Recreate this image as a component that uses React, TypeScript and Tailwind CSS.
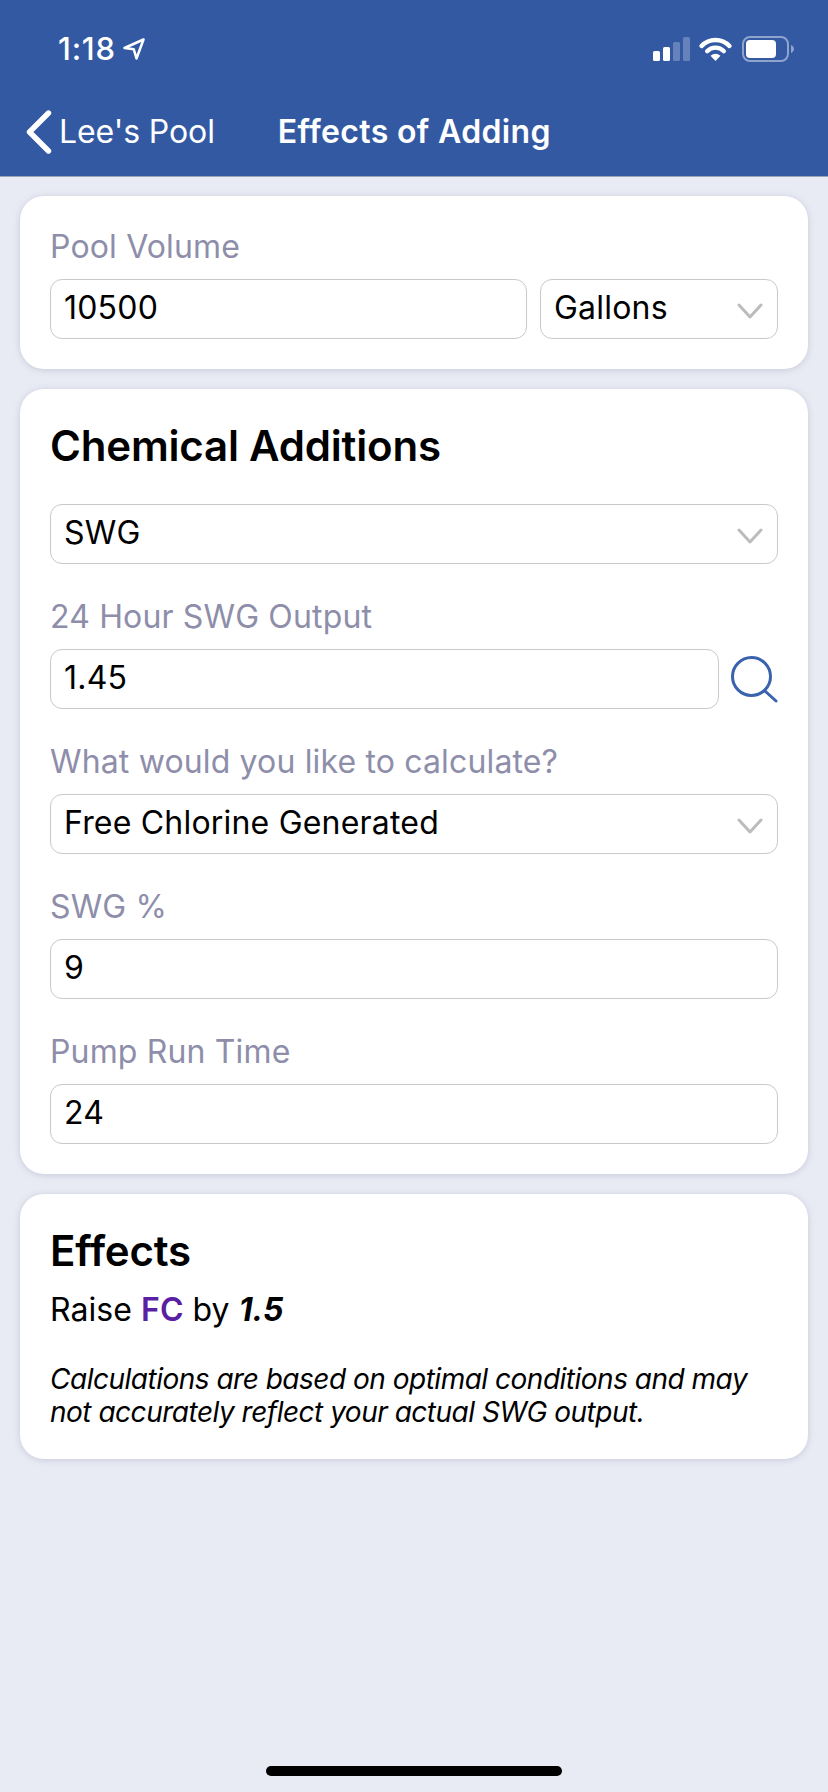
import React from "react";

const FONT = "font-['Inter','Liberation_Sans',sans-serif]";

function Chevron() {
  return (
    <svg width="26" height="16" viewBox="0 0 26 16" fill="none" className="shrink-0 translate-y-[2px]">
      <path d="M2 2 L13 14 L24 2" stroke="#bcbcbc" strokeWidth="3" strokeLinecap="round" strokeLinejoin="round" />
    </svg>
  );
}

function Control({ value, select, className = "" }: { value: string; select?: boolean; className?: string }) {
  return (
    <div
      className={`flex h-[60px] items-center justify-between rounded-[12px] border border-[#c9c9cc] bg-white pl-[13px] pr-[14px] text-[32px] leading-[56px] tracking-[0.2px] text-black ${className}`}
    >
      <span className="-translate-y-[1px]">{value}</span>
      {select ? <Chevron /> : null}
    </div>
  );
}

function Label({ children }: { children: React.ReactNode }) {
  return <div className="mb-[13px] h-[38px] text-[32px] leading-[38px] tracking-[0.15px] text-[#8e8eaa]">{children}</div>;
}

function Card({ children, className = "" }: { children: React.ReactNode; className?: string }) {
  return (
    <section className={`rounded-[24px] bg-white px-[30px] shadow-[0_1px_7px_rgba(110,110,150,0.28)] ${className}`}>
      {children}
    </section>
  );
}

function StatusIcons() {
  return (
    <div className="flex items-center">
      <svg width="37" height="24" viewBox="0 0 37 24" className="mr-[9px]" fill="#fff">
        <rect x="0" y="14" width="7" height="10" rx="1.5" />
        <rect x="10" y="10" width="7" height="14" rx="1.5" />
        <rect x="20" y="5" width="7" height="19" rx="1.5" fillOpacity="0.25" />
        <rect x="30" y="0" width="7" height="24" rx="1.5" fillOpacity="0.25" />
      </svg>
      <svg width="33" height="24" viewBox="0 0 33 24" fill="none" className="mr-[10px]">
        <path d="M2.6 9 A19 19 0 0 1 30.4 9" stroke="#fff" strokeWidth="4.4" strokeLinecap="round" />
        <path d="M8.1 14.2 A11.5 11.5 0 0 1 24.9 14.2" stroke="#fff" strokeWidth="4.2" strokeLinecap="round" />
        <path d="M16.5 24 L11.5 18.8 Q16.5 14.8 21.5 18.8 Z" fill="#fff" />
      </svg>
      <svg width="52" height="26" viewBox="0 0 52 26" fill="none">
        <rect x="1" y="1" width="45" height="24" rx="7" stroke="#fff" strokeOpacity="0.45" strokeWidth="2" />
        <rect x="4" y="4" width="30" height="18" rx="4" fill="#fff" />
        <path d="M49 9 C51 10 52 11.5 52 13 C52 14.5 51 16 49 17 Z" fill="#fff" fillOpacity="0.45" />
      </svg>
    </div>
  );
}

export default function App() {
  return (
    <div className={`${FONT} flex h-[1792px] w-[828px] flex-col overflow-hidden bg-[#e9ebf4] antialiased`}>
      <header className="h-[177px] shrink-0 border-b border-[#9aa3b5] bg-[#3359a3] text-white">
        <div className="flex h-[88px] items-center justify-between pl-[58px] pr-[34px] pt-[10px]">
          <div className="flex items-center">
            <span className="text-[31px] font-medium leading-[36px] tracking-[0.8px]">1:18</span>
            <svg width="22" height="22" viewBox="0 0 22 22" fill="none" className="ml-[7px]">
              <path d="M20.5 1.5 L1.5 10 L10.8 11.3 L13.5 20.5 Z" stroke="#fff" strokeWidth="2.5" strokeLinejoin="round" />
            </svg>
          </div>
          <StatusIcons />
        </div>
        <div className="flex h-[88px] items-center pl-[26px]">
          <svg width="26" height="44" viewBox="0 0 26 44" fill="none" className="mr-[7px]">
            <path d="M22.5 3 L3.5 22 L22.5 41" stroke="#fff" strokeWidth="5.4" strokeLinecap="round" strokeLinejoin="round" />
          </svg>
          <span className="text-[32px] leading-[40px] tracking-[-0.1px]">Lee's Pool</span>
          <span className="ml-[63px] text-[32px] font-semibold leading-[40px] tracking-[0.35px]">Effects of Adding</span>
        </div>
      </header>

      <main className="flex flex-1 flex-col gap-[20px] px-[20px] pt-[19px]">
        <Card className="pb-[30px] pt-[32px]">
          <Label>Pool Volume</Label>
          <div className="flex gap-[13px]">
            <Control value="10500" className="flex-1" />
            <Control value="Gallons" select className="w-[238px]" />
          </div>
        </Card>

        <Card className="flex flex-col gap-[34px] pb-[30px] pt-[33px]">
          <h2 className="h-[48px] text-[42px] font-semibold leading-[48px] tracking-[-0.2px] text-black">Chemical Additions</h2>
          <Control value="SWG" select />
          <div>
            <Label>24 Hour SWG Output</Label>
            <div className="flex items-center gap-[12px]">
              <Control value="1.45" className="flex-1" />
              <svg width="47" height="47" viewBox="0 0 47 47" fill="none" className="shrink-0">
                <circle cx="20.5" cy="20.5" r="19" stroke="#3a62ad" strokeWidth="3" />
                <path d="M34 35 L45 45" stroke="#3a62ad" strokeWidth="3" strokeLinecap="round" />
              </svg>
            </div>
          </div>
          <div>
            <Label>What would you like to calculate?</Label>
            <Control value="Free Chlorine Generated" select />
          </div>
          <div>
            <Label>SWG %</Label>
            <Control value="9" />
          </div>
          <div>
            <Label>Pump Run Time</Label>
            <Control value="24" />
          </div>
        </Card>

        <Card className="pb-[30px] pt-[33px]">
          <h2 className="h-[48px] text-[42px] font-semibold leading-[48px] tracking-[-0.2px] text-black">Effects</h2>
          <p className="mt-[16px] text-[32px] leading-[38px] tracking-[0.05px] text-black">
            Raise <span className="font-semibold text-[#5a1fa3]">FC</span> by <span className="font-bold italic">1.5</span>
          </p>
          <p className="mt-[34px] text-[28px] italic leading-[33px] tracking-[-0.5px] text-black">
            Calculations are based on optimal conditions and may not accurately reflect your actual SWG output.
          </p>
        </Card>
      </main>

      <footer className="flex shrink-0 justify-center pb-[16px]">
        <div className="h-[10px] w-[296px] rounded-full bg-black" />
      </footer>
    </div>
  );
}
